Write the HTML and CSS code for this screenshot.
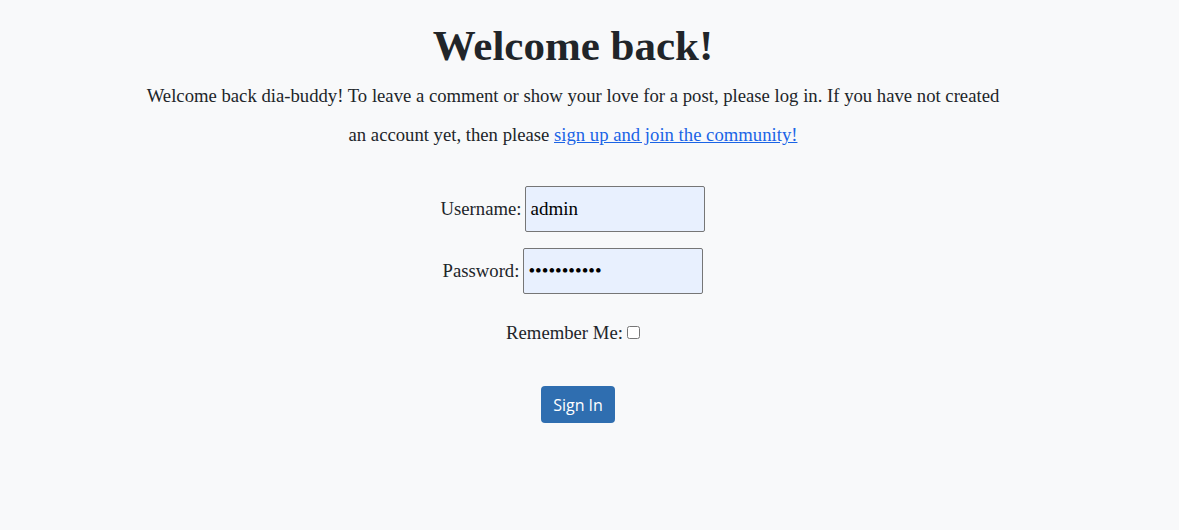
FILE: index.html
```html
<!DOCTYPE html>
<html lang="en">
<head>
<meta charset="utf-8">
<title>Sign In</title>
<link rel="stylesheet" href="styles.css">
</head>
<body>
<main class="page">
  <h1 class="title">Welcome back!</h1>
  <p class="intro">Welcome back dia-buddy! To leave a comment or show your love for a post, please log in. If you have not created an account yet, then please <a class="link" href="#">sign up and join the community!</a></p>
  <form class="login">
    <div class="row">
      <label class="label" for="u">Username:</label>
      <input class="field" id="u" type="text" value="admin">
    </div>
    <div class="row">
      <label class="label" for="p">Password:</label>
      <input class="field" id="p" type="password" value="12345678901">
    </div>
    <div class="row row-check">
      <label class="label" for="r">Remember Me:</label>
      <input class="check" id="r" type="checkbox">
    </div>
    <div class="row row-btn">
      <button class="btn" type="button">Sign In</button>
    </div>
  </form>
</main>
</body>
</html>
```
FILE: styles.css
```css
html, body {
  margin: 0;
  padding: 0;
  background: #f8f9fa;
}
body {
  font-family: "Liberation Serif", serif;
  color: #212529;
}
.page {
  width: 1146px;
  text-align: center;
  padding-top: 18px;
}
.title {
  margin: 0;
  font-size: 43px;
  font-weight: bold;
  line-height: 56px;
}
.intro {
  margin: 2px auto 0;
  width: 870px;
  font-size: 18.7px;
  line-height: 39px;
}
.link {
  color: #1a64e6;
}
.login {
  margin-top: 32px;
  display: flex;
  flex-direction: column;
  align-items: center;
  gap: 16px;
}
.row {
  display: flex;
  align-items: center;
  gap: 4px;
  font-size: 18.7px;
}
.field {
  box-sizing: border-box;
  width: 180px;
  height: 46px;
  border: 1px solid #767676;
  border-radius: 2px;
  background: #e8f0fe;
  font-family: "Liberation Serif", serif;
  font-size: 19px;
  color: #000;
  padding: 0 4px;
}
.row-check {
  margin-top: 12px;
}
.check {
  width: 13px;
  height: 13px;
  margin: 0 0 2px;
}
.row-btn {
  margin-top: 26px;
  padding-left: 10px;
}
.btn {
  background: #2f6eb0;
  color: #fff;
  border: none;
  border-radius: 4px;
  font-family: "Open Sans", "Noto Sans", sans-serif;
  font-size: 16px;
  padding: 0 12px;
  height: 37px;
}
```
